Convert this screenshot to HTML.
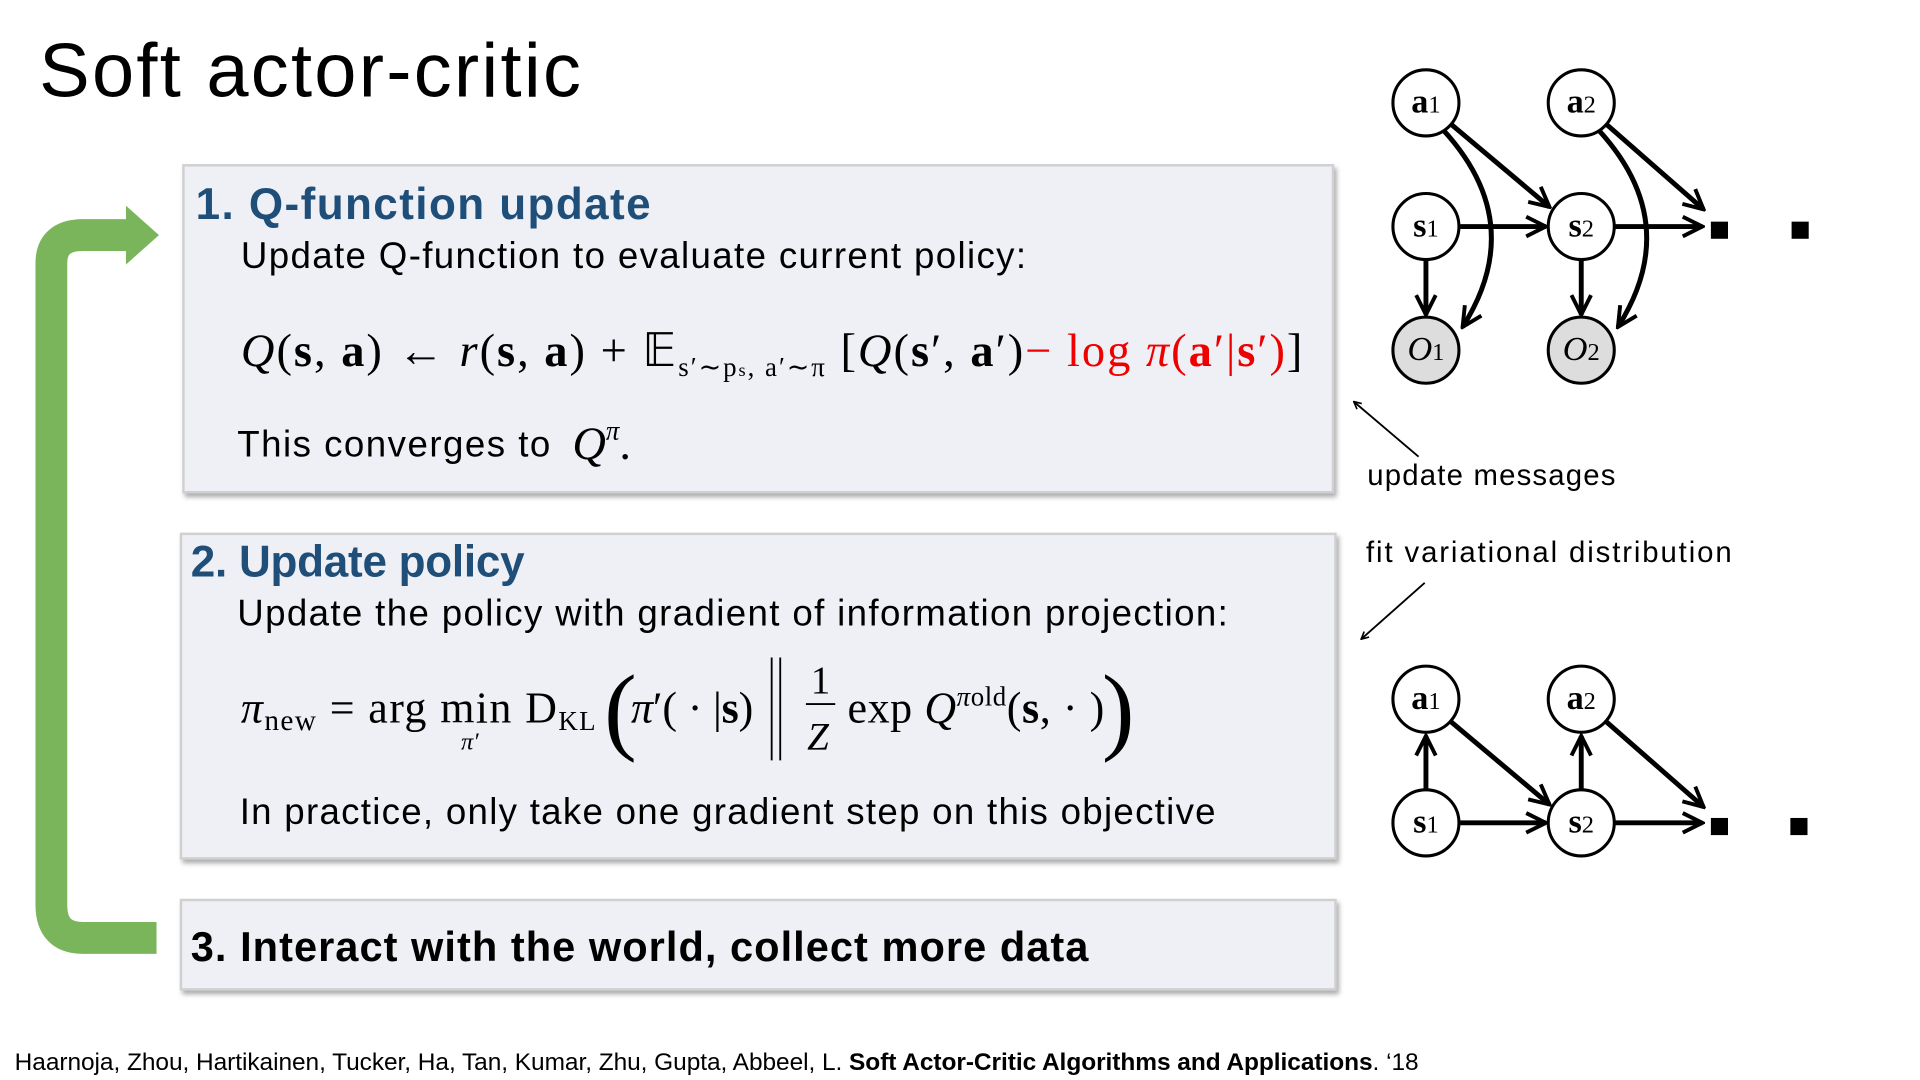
<!DOCTYPE html>
<html><head><meta charset="utf-8"><style>
html,body{margin:0;padding:0;background:#fff;width:1920px;height:1080px;overflow:hidden}
svg{display:block}
.s{font-family:"Liberation Sans",sans-serif}
.m{font-family:"Liberation Serif",serif}
</style></head><body>
<svg width="1920" height="1080" viewBox="0 0 1570 882" preserveAspectRatio="none" xmlns="http://www.w3.org/2000/svg">
<defs>
<filter id="sh" x="-5%" y="-10%" width="110%" height="125%"><feDropShadow dx="2" dy="3" stdDeviation="2" flood-color="#888" flood-opacity="0.7"/></filter>
<marker id="ah" viewBox="0 0 10 10" refX="9" refY="5" markerWidth="5" markerHeight="5" orient="auto"><path d="M1,1 L9,5 L1,9" fill="none" stroke="#000" stroke-width="1.8"/></marker>
<marker id="sa" viewBox="0 0 10 10" refX="9" refY="5" markerWidth="5" markerHeight="5" orient="auto" markerUnits="strokeWidth"><path d="M1,1 L9,5 L1,9" fill="none" stroke="#000" stroke-width="1.6"/></marker>
</defs>
<text x="32" y="79" class="s" font-size="62" textLength="443" fill="#000">Soft actor-critic</text>

<path d="M128,766 L68,766 Q42,766 42,739 L42,215 Q42,192 68,192 L105,192" fill="none" stroke="#7ab55c" stroke-width="26"/>
<path d="M103,168 L130,192 L103,216 z" fill="#7ab55c"/>

<rect x="150" y="135" width="940" height="267" fill="#eef0f5" stroke="#d0d0d0" stroke-width="2" filter="url(#sh)"/>
<rect x="148" y="436" width="944" height="265" fill="#eef0f5" stroke="#d0d0d0" stroke-width="2" filter="url(#sh)"/>
<rect x="148" y="735" width="944" height="73" fill="#eef0f5" stroke="#d0d0d0" stroke-width="2" filter="url(#sh)"/>

<text x="160" y="179" class="s" font-size="36" font-weight="bold" fill="#1f4e79" textLength="372">1. Q-function update</text>
<text x="197" y="219" class="s" font-size="30" textLength="642">Update Q-function to evaluate current policy:</text>
<text x="197" y="299" class="m" font-size="38" textLength="868"><tspan font-style="italic">Q</tspan>(<tspan font-weight="bold">s</tspan>, <tspan font-weight="bold">a</tspan>) ← <tspan font-style="italic">r</tspan>(<tspan font-weight="bold">s</tspan>, <tspan font-weight="bold">a</tspan>) + 𝔼<tspan font-size="22" dy="8">s′∼p<tspan font-size="15">s</tspan>, a′∼π</tspan><tspan dy="-8"> [</tspan><tspan font-style="italic">Q</tspan>(<tspan font-weight="bold">s</tspan>′, <tspan font-weight="bold">a</tspan>′)<tspan fill="#e00">− log <tspan font-style="italic">π</tspan>(<tspan font-weight="bold">a</tspan>′|<tspan font-weight="bold">s</tspan>′)</tspan>]</text>
<text x="194" y="373" class="s" font-size="30" textLength="256">This converges to</text>
<text x="468" y="375" class="m" font-size="38" font-style="italic">Q<tspan font-size="22" dy="-16">π</tspan><tspan dy="16" font-style="normal">.</tspan></text>

<text x="156" y="471" class="s" font-size="36" font-weight="bold" fill="#1f4e79" textLength="273">2. Update policy</text>
<text x="194" y="511" class="s" font-size="30" textLength="810">Update the policy with gradient of information projection:</text>
<text x="197" y="590" class="m" font-size="36" textLength="290"><tspan font-style="italic">π</tspan><tspan font-size="24" dy="6">new</tspan><tspan dy="-6"> = arg min D</tspan><tspan font-size="22" dy="6">KL</tspan></text>
<text x="377" y="612" class="m" font-size="20" font-style="italic">π′</text>
<text x="494" y="606" class="m" font-size="80" font-weight="100">(</text>
<text x="516" y="590" class="m" font-size="36" textLength="100"><tspan font-style="italic">π</tspan>′( · |<tspan font-weight="bold">s</tspan>)</text>
<line x1="631" y1="537" x2="631" y2="621" stroke="#000" stroke-width="1.5"/>
<line x1="638" y1="537" x2="638" y2="621" stroke="#000" stroke-width="1.5"/>
<text x="663" y="566" class="m" font-size="32">1</text>
<line x1="659" y1="575" x2="683" y2="575" stroke="#000" stroke-width="1.5"/>
<text x="660" y="612" class="m" font-size="32" font-style="italic">Z</text>
<text x="693" y="590" class="m" font-size="36" textLength="210">exp <tspan font-style="italic">Q</tspan><tspan font-size="22" dy="-14"><tspan font-style="italic">π</tspan>old</tspan><tspan dy="14">(<tspan font-weight="bold">s</tspan>, · )</tspan></text>
<text x="901" y="606" class="m" font-size="80">)</text>
<text x="196" y="673" class="s" font-size="30" textLength="798">In practice, only take one gradient step on this objective</text>

<text x="156" y="785" class="s" font-size="34" font-weight="bold" fill="#000" textLength="734">3. Interact with the world, collect more data</text>

<text x="12" y="874" class="s" font-size="20" textLength="1148">Haarnoja, Zhou, Hartikainen, Tucker, Ha, Tan, Kumar, Zhu, Gupta, Abbeel, L. <tspan font-weight="bold">Soft Actor-Critic Algorithms and Applications</tspan>. ‘18</text>

<text x="1118" y="396" class="s" font-size="24" textLength="203">update messages</text>
<line x1="1160" y1="373" x2="1107" y2="328" stroke="#000" stroke-width="1.5" marker-end="url(#ah)"/>
<text x="1117" y="459" class="s" font-size="24" textLength="299">fit variational distribution</text>
<line x1="1165" y1="476" x2="1113" y2="522" stroke="#000" stroke-width="1.5" marker-end="url(#ah)"/>

<g stroke="#000" stroke-width="4" fill="none">
<line x1="1194" y1="185" x2="1264" y2="185" marker-end="url(#sa)"/>
<line x1="1321" y1="185" x2="1392" y2="185" marker-end="url(#sa)"/>
<line x1="1186" y1="101" x2="1267" y2="169" marker-end="url(#sa)"/>
<line x1="1313" y1="101" x2="1393" y2="171" marker-end="url(#sa)"/>
<line x1="1166" y1="213" x2="1166" y2="257" marker-end="url(#sa)"/>
<line x1="1293" y1="213" x2="1293" y2="257" marker-end="url(#sa)"/>
<path d="M1180,106 Q1250,182 1196,267" marker-end="url(#sa)"/>
<path d="M1307,106 Q1377,182 1323,267" marker-end="url(#sa)"/>
</g>
<g stroke="#000" stroke-width="2.5">
<circle cx="1166" cy="84" r="27" fill="#fff"/><circle cx="1293" cy="84" r="27" fill="#fff"/>
<circle cx="1166" cy="185" r="27" fill="#fff"/><circle cx="1293" cy="185" r="27" fill="#fff"/>
<circle cx="1166" cy="286" r="27" fill="#ddd"/><circle cx="1293" cy="286" r="27" fill="#ddd"/>
</g>
<rect x="1399" y="181" width="14" height="14"/><rect x="1465" y="181" width="14" height="14"/>
<g class="m" font-size="28" text-anchor="middle">
<text x="1166" y="92"><tspan font-weight="bold">a</tspan><tspan font-size="20">1</tspan></text>
<text x="1293" y="92"><tspan font-weight="bold">a</tspan><tspan font-size="20">2</tspan></text>
<text x="1166" y="193"><tspan font-weight="bold">s</tspan><tspan font-size="20">1</tspan></text>
<text x="1293" y="193"><tspan font-weight="bold">s</tspan><tspan font-size="20">2</tspan></text>
<text x="1166" y="294"><tspan font-style="italic">O</tspan><tspan font-size="20">1</tspan></text>
<text x="1293" y="294"><tspan font-style="italic">O</tspan><tspan font-size="20">2</tspan></text>
</g>

<g stroke="#000" stroke-width="4" fill="none">
<line x1="1194" y1="672" x2="1264" y2="672" marker-end="url(#sa)"/>
<line x1="1321" y1="672" x2="1392" y2="672" marker-end="url(#sa)"/>
<line x1="1186" y1="589" x2="1267" y2="657" marker-end="url(#sa)"/>
<line x1="1313" y1="589" x2="1393" y2="659" marker-end="url(#sa)"/>
<line x1="1166" y1="644" x2="1166" y2="601" marker-end="url(#sa)"/>
<line x1="1293" y1="644" x2="1293" y2="601" marker-end="url(#sa)"/>
</g>
<g stroke="#000" stroke-width="2.5" fill="#fff">
<circle cx="1166" cy="571" r="27"/><circle cx="1293" cy="571" r="27"/>
<circle cx="1166" cy="672" r="27"/><circle cx="1293" cy="672" r="27"/>
</g>
<rect x="1399" y="668" width="14" height="14"/><rect x="1464" y="668" width="14" height="14"/>
<g class="m" font-size="28" text-anchor="middle">
<text x="1166" y="579"><tspan font-weight="bold">a</tspan><tspan font-size="20">1</tspan></text>
<text x="1293" y="579"><tspan font-weight="bold">a</tspan><tspan font-size="20">2</tspan></text>
<text x="1166" y="680"><tspan font-weight="bold">s</tspan><tspan font-size="20">1</tspan></text>
<text x="1293" y="680"><tspan font-weight="bold">s</tspan><tspan font-size="20">2</tspan></text>
</g>
</svg>
</body></html>
